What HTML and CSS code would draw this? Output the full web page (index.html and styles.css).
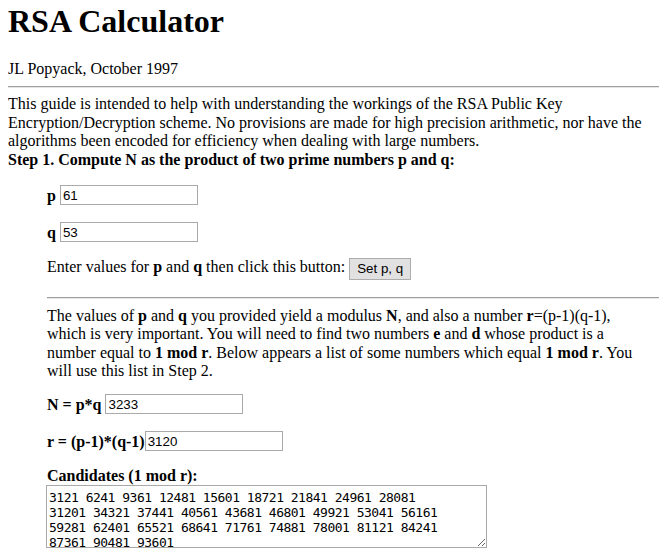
FILE: index.html
```html
<!DOCTYPE html>
<html>
<head>
<meta charset="utf-8">
<title>RSA Calculator</title>
<link rel="stylesheet" href="styles.css">
</head>
<body>
<h1 class="title">RSA Calculator</h1>
<div class="author">JL Popyack, October 1997</div>
<hr class="rule rule-top">
<div class="intro">This guide is intended to help with understanding the workings of the RSA Public Key Encryption/Decryption scheme. No provisions are made for high precision arithmetic, nor have the algorithms been encoded for efficiency when dealing with large numbers.<br><b>Step 1. Compute N as the product of two prime numbers p and q:</b></div>
<div class="indent">
  <div class="row row-p"><b>p</b> <input class="field" type="text" value="61"></div>
  <div class="row row-q"><b>q</b> <input class="field" type="text" value="53"></div>
  <div class="row row-btn">Enter values for <b>p</b> and <b>q</b> then click this button: <button class="btn" type="button">Set p, q</button></div>
  <hr class="rule rule-mid">
  <div class="explain">The values of <b>p</b> and <b>q</b> you provided yield a modulus <b>N</b>, and also a number <b>r</b>=(p-1)(q-1), which is very important. You will need to find two numbers <b>e</b> and <b>d</b> whose product is a number equal to <b>1 mod r</b>. Below appears a list of some numbers which equal <b>1 mod r</b>. You will use this list in Step 2.</div>
  <div class="row row-n"><b>N = p*q</b> <input class="field" type="text" value="3233"></div>
  <div class="row row-r"><b>r = (p-1)*(q-1)</b><input class="field" type="text" value="3120"></div>
  <div class="cands">
    <b>Candidates (1 mod r):</b>
    <textarea class="list">3121 6241 9361 12481 15601 18721 21841 24961 28081
31201 34321 37441 40561 43681 46801 49921 53041 56161
59281 62401 65521 68641 71761 74881 78001 81121 84241
87361 90481 93601</textarea>
  </div>
</div>
</body>
</html>
```
FILE: styles.css
```css
html { background: #fff; }
body {
  margin: 3px 8px 0 8px;
  font-family: "Liberation Serif", "Times New Roman", serif;
  font-size: 16px;
  color: #000;
}
.title {
  font-size: 32px;
  font-weight: bold;
  margin: 0 0 20px 0;
  line-height: 37px;
}
.author { line-height: 18.4px; }
.rule {
  height: 0;
  border: 0;
  border-top: 1px solid #a0a0a0;
  border-bottom: 1px solid #e6e6e6;
}
.rule-top { margin: 8px -8px 7px 0; }
.intro { line-height: 18.4px; }
.indent { margin: 0 6px 0 39px; }
.row {
  line-height: 21px;
  height: 21px;
}
.row-p { margin-top: 16px; }
.row-q { margin-top: 16px; }
.row-btn { margin-top: 13px; height: 24px; }
.row-n { margin-top: 13.5px; }
.row-r { margin-top: 16px; }
.field {
  box-sizing: border-box;
  width: 138px;
  height: 20px;
  padding: 0 2px;
  border: 1px solid #a9a9a9;
  font-family: "Liberation Sans", Arial, sans-serif;
  font-size: 13.33px;
  color: #000;
  background: #fff;
  vertical-align: top;
  margin: 0;
}
.btn {
  box-sizing: border-box;
  height: 22px;
  padding: 0 7px;
  border: 1px solid #adadad;
  border-radius: 0;
  background: #e1e1e1;
  font-family: "Liberation Sans", Arial, sans-serif;
  font-size: 13.33px;
  line-height: 18px;
  color: #000;
  vertical-align: top;
  margin: 2px 0 0 0;
}
.rule-mid { margin: 17px -14px 8px 0; }
.explain { line-height: 18.4px; }
.cands { line-height: 18.4px; margin-top: 14.5px; }
.list {
  display: block;
  box-sizing: border-box;
  width: 441px;
  height: 63px;
  margin: 0 0 0 -1px;
  padding: 4px 2px 0 2px;
  border: 1px solid #a9a9a9;
  font-family: "DejaVu Sans Mono", monospace;
  font-size: 13px;
  letter-spacing: -0.5px;
  line-height: 15px;
  color: #000;
  background: #fff;
  white-space: pre;
  overflow: hidden;
}
```
